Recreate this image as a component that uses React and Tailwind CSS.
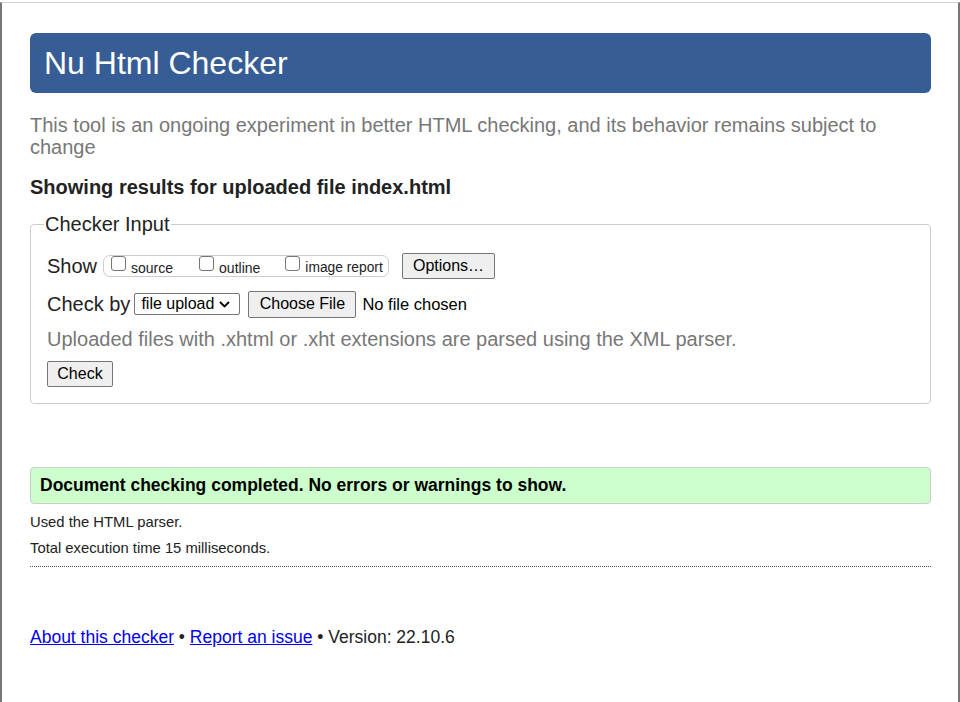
export default function App() {
  return (
    <div className="w-[960px] h-[702px] bg-white overflow-hidden" style={{ fontFamily: '"Liberation Sans", Arial, sans-serif' }}>
      <div className="h-[2px]" />
      <div className="h-[700px] border-t border-[#d0d0d0] border-l-2 border-l-[#777] border-r-2 border-r-[#777]">
        <div className="pl-[28px] pr-[27px] pt-[30px]">
          {/* Header */}
          <div className="h-[60px] bg-[#365d95] rounded-[6px] flex items-center pl-[14px]">
            <h1 className="text-white text-[32px] leading-none mt-[-1px]">Nu Html Checker</h1>
          </div>

          <p className="mt-[21px] text-[20px] leading-[22px] text-[#777]">
            This tool is an ongoing experiment in better HTML checking, and its behavior remains subject to change
          </p>

          <p className="mt-[17px] text-[20px] font-bold text-[#222] leading-[24px]">
            Showing results for uploaded file index.html
          </p>

          {/* Checker Input */}
          <fieldset className="mt-[13px] border border-[#ccc] rounded-[4px] pl-[16px] pr-4 pb-[16px] pt-0">
            <legend className="text-[20px] leading-[24px] text-[#222] px-[1px] ml-[-3px]">Checker Input</legend>

            <div className="flex items-center mt-[16px] h-[28px]">
              <span className="text-[20px] text-[#222]">Show</span>
              <div className="ml-[6px] h-[22px] border border-[#ccc] rounded-[7px] flex items-center pl-[7px] w-[286px] whitespace-nowrap">
                <label className="flex items-center text-[14px] text-[#222]">
                  <span className="w-[15px] h-[15px] border border-[#767676] rounded-[3px] bg-white mt-[-5px]" />
                  <span className="ml-[5px] mt-[4px]">source</span>
                </label>
                <label className="flex items-center text-[14px] text-[#222] ml-[26px]">
                  <span className="w-[15px] h-[15px] border border-[#767676] rounded-[3px] bg-white mt-[-5px]" />
                  <span className="ml-[5px] mt-[4px]">outline</span>
                </label>
                <label className="flex items-center text-[14px] text-[#222] ml-[25px]">
                  <span className="w-[15px] h-[15px] border border-[#767676] rounded-[3px] bg-white mt-[-5px]" />
                  <span className="ml-[5px] mt-[4px] text-[13.8px]">image report</span>
                </label>
              </div>
              <button className="ml-[13px] h-[26px] w-[93px] border border-[#767676] rounded-[2px] bg-[#efefef] text-[16px] text-black leading-none">
                Options…
              </button>
            </div>

            <div className="flex items-center mt-[10px] h-[28px]">
              <span className="text-[20px] text-[#222]">Check by</span>
              <div className="ml-[4px] h-[22px] w-[106px] border border-[#767676] rounded-[2px] bg-white flex items-center pl-[6px] text-[16px] text-black">
                <span>file upload</span>
                <svg className="ml-[5px]" width="11" height="7" viewBox="0 0 11 7" fill="none">
                  <path d="M1 1l4.5 4.5L10 1" stroke="#000" strokeWidth="1.8" />
                </svg>
              </div>
              <button className="ml-[8px] h-[27px] w-[108px] border border-[#767676] rounded-[2px] bg-[#efefef] text-[16px] text-black leading-none">
                Choose File
              </button>
              <span className="ml-[6px] text-[16.5px] text-black">No file chosen</span>
            </div>

            <p className="mt-[9px] text-[20px] leading-[24px] text-[#777]">
              Uploaded files with .xhtml or .xht extensions are parsed using the XML parser.
            </p>

            <button className="mt-[10px] h-[26px] w-[66px] border border-[#767676] rounded-[2px] bg-[#efefef] text-[16px] text-black leading-none">
              Check
            </button>
          </fieldset>

          {/* Result */}
          <div className="mt-[63px] h-[37px] bg-[#ccffcc] border border-[#ccc] rounded-[4px] flex items-center pl-[9px]">
            <span className="text-[17.5px] font-bold text-black">Document checking completed. No errors or warnings to show.</span>
          </div>

          <p className="mt-[9px] text-[14.8px] leading-[18px] text-[#222]">Used the HTML parser.</p>
          <p className="mt-[8px] text-[14.8px] leading-[18px] text-[#222]">Total execution time 15 milliseconds.</p>
          <div className="mt-[9px] border-t border-dotted border-[#555]" />

          <p className="mt-[59px] text-[17.5px] text-[#222] leading-[22px]">
            <a href="#" className="text-[#0000ee] underline">About this checker</a>
            {' • '}
            <a href="#" className="text-[#0000ee] underline">Report an issue</a>
            {' • Version: 22.10.6'}
          </p>
        </div>
      </div>
    </div>
  )
}
